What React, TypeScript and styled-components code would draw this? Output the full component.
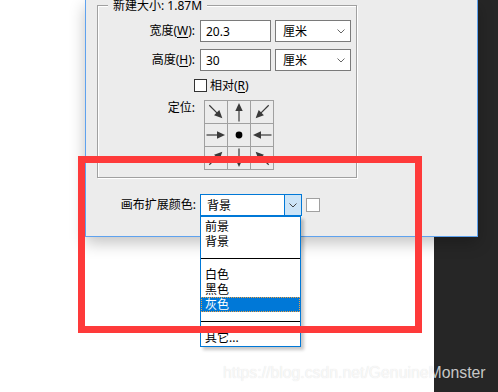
import React from "react";
import styled, { createGlobalStyle } from "styled-components";

const Global = createGlobalStyle`
  html, body { margin: 0; padding: 0; background: #ffffff; }
  body { font-family: "Noto Sans", "Noto Sans CJK SC", sans-serif; }
`;

const FONT = `"Noto Sans", "Noto Sans CJK SC", sans-serif`;

const Page = styled.div`
  position: relative;
  width: 498px;
  height: 392px;
  display: flex;
  overflow: hidden;
  font-family: ${FONT};
  font-size: 12px;
  color: #000;
`;

const Desktop = styled.div`
  flex: 1;
  background: #ffffff;
`;

const DarkStrip = styled.div`
  width: 64px;
  background: #262626;
`;

const Dialog = styled.div`
  position: absolute;
  left: 85px;
  top: 0;
  width: 393px;
  height: 237px;
  box-sizing: border-box;
  background: #ececec;
  border: 1px solid #5fa2ee;
  border-top: none;
  box-shadow: 0 6px 15px rgba(0, 0, 0, 0.24);
  display: flex;
  flex-direction: column;
  z-index: 1;
`;

const GroupBox = styled.div`
  margin: 5px 0 0 11px;
  width: 260px;
  height: 173px;
  box-sizing: border-box;
  border: 1px solid #a0a0a0;
  box-shadow: 1px 1px 0 #ffffff, inset 1px 1px 0 #ffffff;
  display: flex;
  flex-direction: column;
`;

const Legend = styled.div`
  width: fit-content;
  margin: -6px 0 1px 10px;
  padding: 0 5px;
  background: #ececec;
  line-height: 12px;
  font-size: 12px;
`;

const FieldRow = styled.div<{ $top: number; $align?: string }>`
  display: grid;
  grid-template-columns: 97px max-content;
  column-gap: 5px;
  align-items: ${(p) => p.$align || "center"};
  margin-top: ${(p) => p.$top}px;
`;

const Label = styled.div`
  text-align: right;
  line-height: 16px;
  white-space: nowrap;
`;

const Mn = styled.span`
  text-decoration: underline;
  text-underline-offset: 2px;
`;

const Controls = styled.div`
  display: flex;
  gap: 4px;
`;

const TextInput = styled.div`
  width: 71px;
  height: 22px;
  box-sizing: border-box;
  border: 1px solid #7a7a7a;
  background: #fff;
  padding-left: 5px;
  display: flex;
  align-items: center;
  font-size: 12px;
`;

const Select = styled.div`
  width: 76px;
  height: 22px;
  box-sizing: border-box;
  border: 1px solid #7a7a7a;
  background: #fff;
  padding: 0 5px 0 7px;
  display: flex;
  align-items: center;
  justify-content: space-between;
`;

const CheckLine = styled.div`
  display: flex;
  align-items: center;
  gap: 3px;
  margin-left: -6px;
  height: 16px;
`;

const CheckBox = styled.div`
  width: 13px;
  height: 13px;
  box-sizing: border-box;
  border: 1px solid #333;
  background: #fff;
`;

const AnchorGrid = styled.div`
  margin-left: 4px;
  display: grid;
  grid-template-columns: repeat(3, 22px);
  grid-auto-rows: 22px;
  gap: 1px;
  padding: 1px;
  background: #a0a0a0;
  width: fit-content;
`;

const AnchorCell = styled.div`
  background: #ececec;
  display: flex;
  align-items: center;
  justify-content: center;
`;

const ColorRow = styled.div`
  display: flex;
  align-items: center;
  margin-top: 16px;
  gap: 4px;
`;

const ColorLabel = styled.div`
  width: 110px;
  text-align: right;
  line-height: 16px;
`;

const ComboWrap = styled.div`
  position: relative;
`;

const Combo = styled.div`
  width: 102px;
  height: 22px;
  box-sizing: border-box;
  border: 1px solid #0078d7;
  background: #fff;
  display: flex;
`;

const ComboText = styled.div`
  flex: 1;
  padding-left: 6px;
  display: flex;
  align-items: center;
  font-size: 12px;
`;

const ComboButton = styled.div`
  width: 17px;
  box-sizing: border-box;
  border-left: 1px solid #0078d7;
  background: #cce4f7;
  display: flex;
  align-items: center;
  justify-content: center;
`;

const Swatch = styled.div`
  width: 14px;
  height: 14px;
  box-sizing: border-box;
  border: 1px solid #a0a0a0;
  background: #fff;
`;

const DropList = styled.div`
  position: absolute;
  top: 22px;
  left: 0;
  width: 101px;
  box-sizing: border-box;
  border: 1px solid #0078d7;
  background: #fff;
  padding: 2px 0 1px;
  box-shadow: 3px 3px 3px rgba(0, 0, 0, 0.22);
  z-index: 3;
`;

const Item = styled.div<{ $active?: boolean }>`
  height: 15px;
  box-sizing: border-box;
  padding-left: ${(p) => (p.$active ? 3 : 4)}px;
  font-size: 12px;
  color: ${(p) => (p.$active ? "#fff" : "#000")};
  background: ${(p) => (p.$active ? "#0078d7" : "transparent")};
  border: ${(p) => (p.$active ? "1px dotted #f0a040" : "none")};
  line-height: ${(p) => (p.$active ? 13 : 15)}px;
  white-space: nowrap;
`;

const Separator = styled.div`
  height: 18px;
  display: flex;
  align-items: center;
  &::after {
    content: "";
    flex: 1;
    height: 1px;
    background: #000;
  }
`;

const Annotation = styled.div`
  position: absolute;
  left: 78px;
  top: 156px;
  width: 344px;
  height: 177px;
  box-sizing: border-box;
  border: 7px solid #fe3a3a;
  z-index: 5;
  pointer-events: none;
`;

const Watermark = styled.div`
  position: absolute;
  left: 223px;
  top: 364px;
  font-family: "Liberation Sans", Arial, sans-serif;
  font-size: 15.8px;
  line-height: 18px;
  color: rgba(255, 255, 255, 0.76);
  text-shadow: 0 0 1px rgba(0, 0, 0, 0.14);
  white-space: nowrap;
  z-index: 6;
`;

const Chevron = ({ color = "#555" }: { color?: string }) => (
  <svg width="8" height="5" viewBox="0 0 8 5">
    <polyline points="0.5,0.5 4,4 7.5,0.5" fill="none" stroke={color} strokeWidth="1" />
  </svg>
);

const Arrow = ({ angle }: { angle: number }) => (
  <svg width="22" height="22" viewBox="0 0 22 22">
    <g transform={`rotate(${angle} 11 11)`}>
      <line x1="1.5" y1="11" x2="13" y2="11" stroke="#3a3a3a" strokeWidth="1.2" />
      <polygon points="12,7.3 20,11 12,14.7" fill="#3a3a3a" />
    </g>
  </svg>
);

const Dot = () => (
  <svg width="22" height="22" viewBox="0 0 22 22">
    <circle cx="11" cy="11" r="3.4" fill="#000" />
  </svg>
);

const anchors: (number | null)[] = [45, -90, 135, 0, null, 180, -45, 90, -135];

export default function App() {
  return (
    <Page>
      <Global />
      <Desktop />
      <DarkStrip />
      <Dialog>
        <GroupBox>
          <Legend>新建大小: 1.87M</Legend>
          <FieldRow $top={7}>
            <Label>
              宽度(<Mn>W</Mn>):
            </Label>
            <Controls>
              <TextInput>20.3</TextInput>
              <Select>
                <span>厘米</span>
                <Chevron color="#666" />
              </Select>
            </Controls>
          </FieldRow>
          <FieldRow $top={7}>
            <Label>
              高度(<Mn>H</Mn>):
            </Label>
            <Controls>
              <TextInput>30</TextInput>
              <Select>
                <span>厘米</span>
                <Chevron color="#666" />
              </Select>
            </Controls>
          </FieldRow>
          <FieldRow $top={6}>
            <span />
            <CheckLine>
              <CheckBox />
              <span>
                相对(<Mn>R</Mn>)
              </span>
            </CheckLine>
          </FieldRow>
          <FieldRow $top={7} $align="start">
            <Label>定位:</Label>
            <AnchorGrid>
              {anchors.map((a, i) => (
                <AnchorCell key={i}>{a === null ? <Dot /> : <Arrow angle={a} />}</AnchorCell>
              ))}
            </AnchorGrid>
          </FieldRow>
        </GroupBox>
        <ColorRow>
          <ColorLabel>画布扩展颜色:</ColorLabel>
          <ComboWrap>
            <Combo>
              <ComboText>背景</ComboText>
              <ComboButton>
                <Chevron color="#444" />
              </ComboButton>
            </Combo>
            <DropList>
              <Item>前景</Item>
              <Item>背景</Item>
              <Separator />
              <Item>白色</Item>
              <Item>黑色</Item>
              <Item $active>灰色</Item>
              <Separator />
              <Item>其它...</Item>
            </DropList>
          </ComboWrap>
          <Swatch />
        </ColorRow>
      </Dialog>
      <Annotation />
      <Watermark>https://blog.csdn.net/GenuineMonster</Watermark>
    </Page>
  );
}
